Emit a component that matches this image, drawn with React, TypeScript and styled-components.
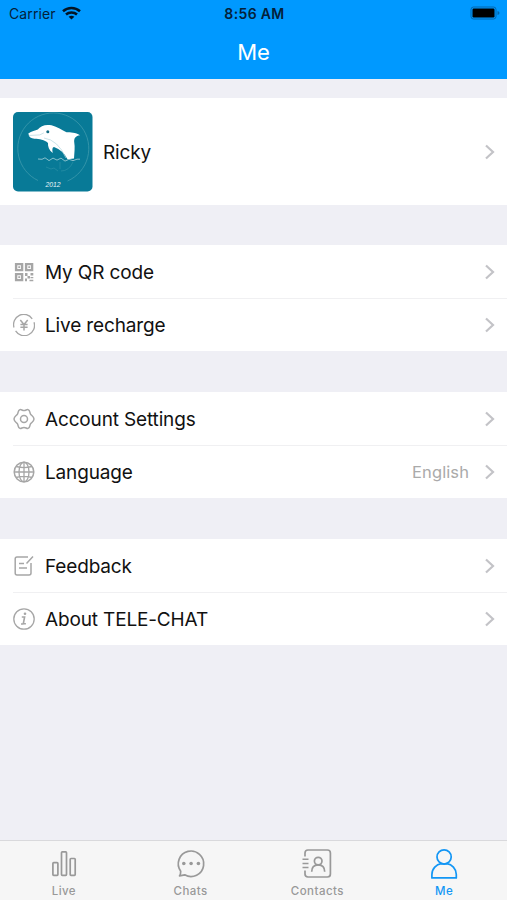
import React from "react";
import styled, { createGlobalStyle } from "styled-components";

const GlobalStyle = createGlobalStyle`
  * { box-sizing: border-box; }
  body { margin: 0; background: #efeff4; font-family: Inter, "Liberation Sans", sans-serif; color: #111; }
  svg { display: block; flex: none; }
`;

const Screen = styled.div`
  width: 100%;
  height: 900px;
  display: flex;
  flex-direction: column;
  background: #efeff5;
  overflow: hidden;
`;

const Header = styled.header`
  height: 79px;
  flex: none;
  background: #0099ff;
`;

const StatusBar = styled.div`
  height: 27px;
  padding: 0 7px 0 9px;
  display: grid;
  grid-template-columns: 1fr auto 1fr;
  align-items: center;
  color: #04213a;
  font-size: 14px;
`;

const Carrier = styled.div`
  display: flex;
  align-items: center;
  gap: 6px;
  letter-spacing: 0.1px;

  svg { margin-bottom: 2px; }
`;

const Clock = styled.div`
  font-size: 14px;
  font-weight: 600;
  letter-spacing: 0.35px;
`;

const BatterySlot = styled.div`
  display: flex;
  justify-content: flex-end;
  padding-bottom: 1px;
`;

const Title = styled.h1`
  margin: 0;
  height: 50px;
  line-height: 50px;
  text-align: center;
  font-size: 22px;
  font-weight: 400;
  color: #fff;
`;

const Content = styled.main`
  flex: 1;
  padding-top: 19px;
`;

const Profile = styled.section`
  height: 107px;
  padding: 0 11px 0 13px;
  margin-bottom: 40px;
  display: flex;
  align-items: center;
  background: #fff;
`;

const Group = styled.section`
  height: 106px;
  margin-bottom: 41px;
  background: #fff;
`;

const Row = styled.div<{ $divided?: boolean }>`
  height: 53px;
  margin-left: 13px;
  padding-right: 11px;
  display: flex;
  align-items: center;
  ${(p) => p.$divided && "box-shadow: 0 1px 0 #f0f0f2;"}
`;

const Label = styled.span`
  flex: 1;
  margin-left: 10px;
  padding-top: 2px;
  font-size: 19px;
  line-height: 26px;
  white-space: nowrap;
  letter-spacing: -0.15px;
`;

const Value = styled.span`
  margin-right: 15px;
  padding-top: 1px;
  font-size: 16.5px;
  color: #aaa;
  letter-spacing: 0.1px;
`;

const TabBar = styled.nav`
  height: 60px;
  flex: none;
  display: grid;
  grid-template-columns: repeat(4, 1fr);
  background: #f6f6f6;
  border-top: 1px solid #d9d9dc;
`;

const Tab = styled.div<{ $active?: boolean }>`
  display: flex;
  flex-direction: column;
  align-items: center;
  padding: 6px 0 0 1px;
  gap: 3px;
  color: ${(p) => (p.$active ? "#1296f5" : "#999")};
`;

const TabLabel = styled.span`
  font-size: 11.5px;
  line-height: 16px;
  font-weight: 500;
  letter-spacing: 0.45px;
`;

const Wifi = () => (
  <svg width="19" height="14" viewBox="0 0 19 14" fill="none" stroke="#031525" strokeWidth="2.5">
    <path d="M1 5.2C5.8.9 13.2.9 18 5.2M4 8.5C7 5.8 12 5.8 15 8.5" />
    <path d="M9.5 13.6 6.6 10.8Q9.5 8.6 12.4 10.8Z" fill="#031525" stroke="none" />
  </svg>
);

const Battery = () => (
  <svg width="30" height="14" viewBox="0 0 30 14">
    <rect x="1" y="1" width="25" height="12" rx="2.5" fill="none" stroke="#0267ae" />
    <rect x="2.5" y="2.5" width="22" height="9" rx="1.2" fill="#000" />
    <path d="M27.5 5v4q2-.6 2-2t-2-2Z" fill="#0267ae" />
  </svg>
);

const Chevron = () => (
  <svg width="12" height="16" viewBox="0 0 12 16" fill="none" stroke="#c3c3c7" strokeWidth="2.2">
    <path d="m2 1.500 7 6.500-7 6.500" />
  </svg>
);

const Avatar = () => (
  <svg width="80" height="80" viewBox="0 0 80 80">
    <rect width="79.500" height="79.500" rx="5" fill="#087a97" />
    <path d="M25 68.500A35.500 35.500 0 1 1 54.500 69" fill="none" stroke="#3d9bad" strokeWidth="0.8" />
    <path d="M15.300 21.400C18.500 19.200 22.500 18.700 24.800 17.500C27.500 13.900 32.500 12 38.500 13.300C44.500 14.700 49 18.500 53.500 20.300C57.500 20.500 62.500 20.200 67 23.200C62.500 24 61 26 61.200 30C62.200 35 61.300 41 61 46.500L54.500 47.300Q50.500 38.500 41 35C39.300 35.200 39 37.500 39.700 41C36 38 34.700 34.500 35 31C31.500 27.500 26.500 27 21.500 26.700Q16 25.800 16 23.500Z" fill="#fff" />
    <path d="m15.800 23.500 11-.6 4-2M31 26q14 2 22 20" fill="none" stroke="#b5d7de" strokeWidth="0.7" />
    <circle cx="34.800" cy="19.800" r="1.500" fill="#126a83" />
    <path d="m25 47 4 .3 3-1.500 4 2.800 4-2.500 4 2 4-2 4 3 4-1.800 4 1.400 4-1.500h3" fill="none" stroke="#94c7d1" strokeWidth="0.9" />
    <path d="M33 55l5 2 3-1 4 3M47 50v7M48 59q8 0 12-9" fill="none" stroke="#2b91a6" strokeWidth="0.7" />
    <text x="40" y="74.500" textAnchor="middle" fontFamily="Liberation Sans, sans-serif" fontSize="6.800" fontStyle="italic" fill="#e8f5f7">2012</text>
  </svg>
);

const icon = {
  width: 22,
  height: 22,
  viewBox: "0 0 22 22",
  fill: "none",
  stroke: "#a6a6a6",
  strokeWidth: 1.3,
};

const QrIcon = () => (
  <svg {...icon}>
    <path d="M3.100 3.100h6v6h-6ZM13.100 3.100h6v6h-6ZM3.100 13.100h6v6h-6Z" strokeWidth="2.400" />
    <path d="M5.300 5.300h1.800v1.800H5.300ZM15.300 5.300h1.800v1.800h-1.800ZM5.300 15.300h1.800v1.800H5.300ZM12 12h2.500v3H12ZM17.500 12h2.800v2.500h-2.800ZM12 17.500h2v2.800h-2ZM14.500 15h2.500v2.500h-2.500ZM17.500 16h2.800v1.300h-2.800ZM16.500 18.800h3.800v1.500h-3.800Z" fill="#a6a6a6" stroke="none" />
  </svg>
);

const RechargeIcon = () => (
  <svg {...icon}>
    <path d="M1 13.500A10.200 10.200 0 0 1 19.200 4.800M21 8.300A10.200 10.200 0 0 1 2.600 16.800" />
    <path d="m7.300 6 3.700 4.500L14.700 6M7.400 10.600h7.200M7.400 13.300h7.200M11 10.500v6" strokeWidth="1.500" />
  </svg>
);

const SettingsIcon = () => (
  <svg {...icon} strokeWidth={1.5}>
    <path d="M6.900 1.600C8.300 1.200 9.200 2.600 11 2.600S13.700 1.200 15.100 1.600C17.200 2.300 16.500 4.500 17.500 6.100S20.800 8.200 21 11C20.800 13.800 18.500 14.300 17.500 15.900S17.200 19.700 15.100 20.400C13.700 20.800 12.800 19.400 11 19.400S8.300 20.800 6.900 20.400C4.800 19.700 5.500 17.500 4.500 15.900S1.200 13.800 1 11C1.200 8.200 3.500 7.700 4.500 6.100S4.800 2.300 6.900 1.600Z" />
    <circle cx="11" cy="11" r="3.500" />
  </svg>
);

const GlobeIcon = () => (
  <svg {...icon}>
    <circle cx="11" cy="11" r="9.800" strokeWidth="1.500" />
    <ellipse cx="11" cy="11" rx="5" ry="9.800" />
    <path d="M11 1v20M1 11h20M3 5.500q8 2.200 16 0M3 16.500q8-2.200 16 0" />
  </svg>
);

const FeedbackIcon = () => (
  <svg {...icon} strokeWidth={1.5}>
    <path d="M15 2H4Q2.200 2 2.200 4v14Q2.200 20 4 20h12q2 0 2-2V8" />
    <path d="m20 1.500-6.500 7M6 8.500h5M6 13h8" />
  </svg>
);

const InfoIcon = () => (
  <svg {...icon}>
    <circle cx="11" cy="11" r="10.200" />
    <path d="M8.800 9h2.800l-1.300 6.800h2.600M8 16h2.400" strokeWidth="1.600" />
    <circle cx="12" cy="5.800" r="1.300" fill="#a6a6a6" stroke="none" />
  </svg>
);

const tabIcon = {
  width: 32,
  height: 33,
  viewBox: "0 0 32 33",
  fill: "none",
  stroke: "currentColor",
  strokeWidth: 1.7,
};

const LiveIcon = () => (
  <svg {...tabIcon}>
    <rect x="4.900" y="15.600" width="5" height="12.800" rx=".8" />
    <rect x="13.500" y="4.900" width="5" height="23.500" rx=".8" />
    <rect x="22.200" y="11.500" width="5" height="16.900" rx=".8" />
  </svg>
);

const ChatsIcon = () => (
  <svg {...tabIcon}>
    <path d="M5.700 24.200A12.700 12.700 0 1 1 9.700 27.800L4.500 28.900Q5.800 27 5.700 24.200Z" strokeLinejoin="round" />
    <g fill="currentColor" stroke="none">
      <circle cx="8.800" cy="16.500" r="1.800" /><circle cx="16.100" cy="16.500" r="1.800" /><circle cx="23.400" cy="16.500" r="1.800" />
    </g>
  </svg>
);

const ContactsIcon = () => (
  <svg {...tabIcon}>
    <path d="M4 9.500V6Q4 3 7 3h19.400q3 0 3 3v21q0 3-3 3H7q-3 0-3-3v-3.500" />
    <path d="M1.500 12.300h6M1.500 16.400h6M1.500 20.500h6" strokeWidth="1.500" />
    <circle cx="17.200" cy="14.100" r="3.800" />
    <path d="M10.700 24.800c0-4.400 2.400-7 6.500-7s6.500 2.600 6.500 7" />
  </svg>
);

const MeIcon = () => (
  <svg {...tabIcon}>
    <circle cx="16.100" cy="9.900" r="7.100" />
    <path d="M3.900 30.900v-3.300c0-6 4.600-10.100 9.300-10.900q2.900.7 5.800 0c4.700.8 9.300 4.900 9.300 10.900v3.300Z" strokeLinejoin="round" />
  </svg>
);

type Item = { label: string; icon: React.ReactNode; value?: string };

const groups: Item[][] = [
  [
    { label: "My QR code", icon: <QrIcon /> },
    { label: "Live recharge", icon: <RechargeIcon /> },
  ],
  [
    { label: "Account Settings", icon: <SettingsIcon /> },
    { label: "Language", icon: <GlobeIcon />, value: "English" },
  ],
  [
    { label: "Feedback", icon: <FeedbackIcon /> },
    { label: "About TELE-CHAT", icon: <InfoIcon /> },
  ],
];

const tabs = [
  { label: "Live", icon: <LiveIcon /> },
  { label: "Chats", icon: <ChatsIcon /> },
  { label: "Contacts", icon: <ContactsIcon /> },
  { label: "Me", icon: <MeIcon />, active: true },
];

export default function App() {
  return (
    <Screen>
      <GlobalStyle />
      <Header>
        <StatusBar>
          <Carrier>Carrier <Wifi /></Carrier>
          <Clock>8:56 AM</Clock>
          <BatterySlot><Battery /></BatterySlot>
        </StatusBar>
        <Title>Me</Title>
      </Header>
      <Content>
        <Profile>
          <Avatar />
          <Label>Ricky</Label>
          <Chevron />
        </Profile>
        {groups.map((items, g) => (
          <Group key={g}>
            {items.map((item, i) => (
              <Row key={item.label} $divided={i === 0}>
                {item.icon}
                <Label>{item.label}</Label>
                {item.value && <Value>{item.value}</Value>}
                <Chevron />
              </Row>
            ))}
          </Group>
        ))}
      </Content>
      <TabBar>
        {tabs.map((tab) => (
          <Tab key={tab.label} $active={tab.active}>
            {tab.icon}
            <TabLabel>{tab.label}</TabLabel>
          </Tab>
        ))}
      </TabBar>
    </Screen>
  );
}
